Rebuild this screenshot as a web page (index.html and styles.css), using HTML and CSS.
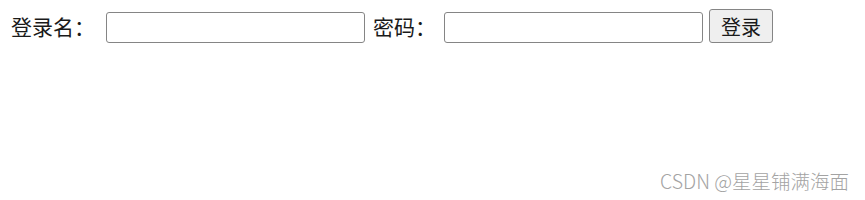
FILE: index.html
```html
<!DOCTYPE html>
<html lang="zh-CN">
<head>
    <meta charset="UTF-8">
    <title>登录</title>
    <link rel="stylesheet" href="styles.css">
</head>
<body>
    <form class="login-form">
        <label for="username">登录名：</label>
        <input type="text" id="username" class="field">
        <label for="password">密码：</label>
        <input type="password" id="password" class="field">
        <button type="button" class="login-btn">登录</button>
    </form>
    <div class="watermark">CSDN @星星铺满海面</div>
</body>
</html>
```

FILE: styles.css
```css
* {
    box-sizing: border-box;
}

body {
    margin: 0;
    padding: 9px 11px;
    font-family: "Noto Sans CJK SC", sans-serif;
    font-size: 21px;
    color: #1a1a1a;
    background: #fff;
}

.login-form {
    display: flex;
    align-items: center;
}

.login-form label {
    line-height: 34px;
}

.field {
    width: 259px;
    height: 31px;
    margin: 3px 8px 0 8px;
    border: 1px solid #858585;
    border-radius: 3px;
    background: #fff;
}

#username {
    margin-left: 11px;
}

.login-btn {
    width: 64px;
    height: 34px;
    margin-left: -2px;
    padding: 0;
    font-family: "Noto Sans CJK SC", sans-serif;
    font-size: 20px;
    color: #1a1a1a;
    background: #efefef;
    border: 1px solid #858585;
    border-radius: 3px;
}

.watermark {
    position: absolute;
    right: 16px;
    bottom: 5px;
    font-family: "Noto Sans CJK SC", sans-serif;
    font-size: 19.5px;
    font-weight: 300;
    color: #a3a3a3;
}
```
